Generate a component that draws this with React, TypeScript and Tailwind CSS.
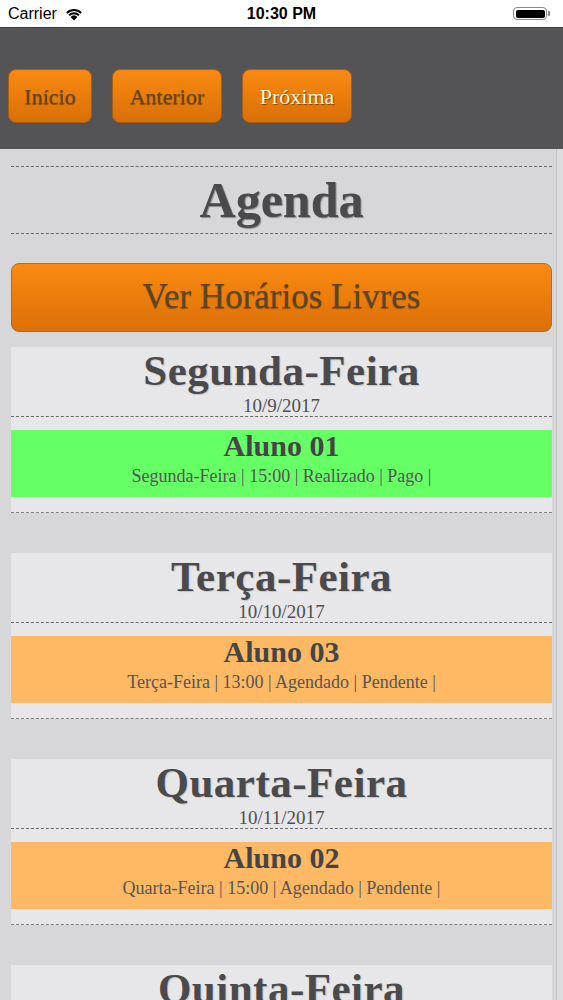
const serif = "font-['Liberation_Serif','Times_New_Roman',serif]";

type Lesson = { name: string; detail: string; color: string };
type Day = { title: string; date: string; lessons: Lesson[] };

const days: Day[] = [
  {
    title: "Segunda-Feira",
    date: "10/9/2017",
    lessons: [{ name: "Aluno 01", detail: "Segunda-Feira | 15:00 | Realizado | Pago |", color: "bg-[#66ff66]" }],
  },
  {
    title: "Terça-Feira",
    date: "10/10/2017",
    lessons: [{ name: "Aluno 03", detail: "Terça-Feira | 13:00 | Agendado | Pendente |", color: "bg-[#ffb864]" }],
  },
  {
    title: "Quarta-Feira",
    date: "10/11/2017",
    lessons: [{ name: "Aluno 02", detail: "Quarta-Feira | 15:00 | Agendado | Pendente |", color: "bg-[#ffb864]" }],
  },
  { title: "Quinta-Feira", date: "10/12/2017", lessons: [] },
];

function StatusBar() {
  return (
    <div className="relative flex h-[27px] items-center bg-white px-[8px] font-['Liberation_Sans',Arial,sans-serif] text-[16px] text-black">
      <span>Carrier</span>
      <svg className="ml-[7px]" width="20" height="14" viewBox="0 0 20 14">
        <path d="M10 13.5 L6.6 9.9 A5 5 0 0 1 13.4 9.9 Z" fill="#000" />
        <path d="M4.4 7.6 A8 8 0 0 1 15.6 7.6 L14.2 9 A6 6 0 0 0 5.8 9 Z" fill="#000" />
        <path d="M2.1 5.3 A11.3 11.3 0 0 1 17.9 5.3 L16.5 6.7 A9.3 9.3 0 0 0 3.5 6.7 Z" fill="#000" />
      </svg>
      <span className="absolute left-1/2 -translate-x-1/2 font-semibold">10:30 PM</span>
      <div className="ml-auto mr-[5px] flex items-center">
        <div className="flex h-[13px] w-[34px] items-center rounded-[4px] border border-[#888] p-[1.5px]">
          <div className="h-full w-full rounded-[2px] bg-black" />
        </div>
        <div className="ml-[1px] h-[5px] w-[2px] rounded-r-[1px] bg-[#888]" />
      </div>
    </div>
  );
}

function NavButton({ label, width, light }: { label: string; width: string; light?: boolean }) {
  return (
    <div
      className={`${width} ${serif} flex h-[54px] items-center justify-center rounded-[8px] border border-[#a85e12] bg-gradient-to-b from-[#fa8a10] to-[#d96f08] text-[22px] ${
        light
          ? "text-[#fff6dc] [text-shadow:1px_1px_1px_rgba(0,0,0,0.45)]"
          : "text-[#634617] [text-shadow:0_1px_1px_rgba(0,0,0,0.4)]"
      }`}
    >
      {label}
    </div>
  );
}

function DayCard({ day }: { day: Day }) {
  return (
    <div className="mb-[40px] border-b border-dashed border-[#808080] bg-[#e7e7e9] pb-[15px]">
      <div className="border-b border-dashed border-[#6a6a6a] text-center text-[#4a4a4c]">
        <div
          className={`${serif} text-[43px] font-bold leading-[48px] tracking-[0.5px] [text-shadow:1px_1px_1px_rgba(0,0,0,0.15)]`}
        >
          {day.title}
        </div>
        <div className={`${serif} text-[19px] leading-[21px] text-[#4f4f51]`}>{day.date}</div>
      </div>
      {day.lessons.map((l) => (
        <div key={l.name} className={`${l.color} mt-[13px] flex h-[67px] flex-col items-center pt-[1px] text-center`}>
          <div className={`${serif} text-[30px] font-bold leading-[30px] text-[#454545]`}>{l.name}</div>
          <div className={`${serif} mt-[5px] text-[18px] leading-[20px] text-[#555]`}>{l.detail}</div>
        </div>
      ))}
    </div>
  );
}

export default function App() {
  return (
    <div className="h-[1000px] w-[563px] overflow-hidden bg-[#d7d7d9]">
      <StatusBar />
      <div className="flex h-[122px] items-start gap-[20px] border-t border-[#3a3a3c] bg-[#545456] px-[8px] pt-[41px]">
        <NavButton label="Início" width="w-[84px]" />
        <NavButton label="Anterior" width="w-[110px]" />
        <NavButton label="Próxima" width="w-[110px]" light />
      </div>
      <div className="flex">
        <div className="w-[556px] pl-[11px] pr-[4px] pt-[17px]">
          <div className="flex h-[68px] items-center justify-center border-y border-dashed border-[#6a6a6a]">
            <span className={`${serif} text-[50px] font-bold leading-none text-[#4a4a4c] [text-shadow:1px_1px_1px_rgba(0,0,0,0.35)]`}>
              Agenda
            </span>
          </div>
          <div
            className={`${serif} mt-[29px] flex h-[69px] items-center justify-center rounded-[8px] border border-[#8a7754] bg-gradient-to-b from-[#fa8a12] to-[#dc7006] text-[35px] text-[#5a4526] [text-shadow:0_1px_1px_rgba(0,0,0,0.35)]`}
          >
            Ver Horários Livres
          </div>
          <div className="mt-[15px]">
            {days.map((d) => (
              <DayCard key={d.title} day={d} />
            ))}
          </div>
        </div>
        <div className="w-[1px] self-stretch bg-[#c4c4c6]" />
        <div className="flex-1 bg-[#dcdcde]" />
      </div>
    </div>
  );
}
